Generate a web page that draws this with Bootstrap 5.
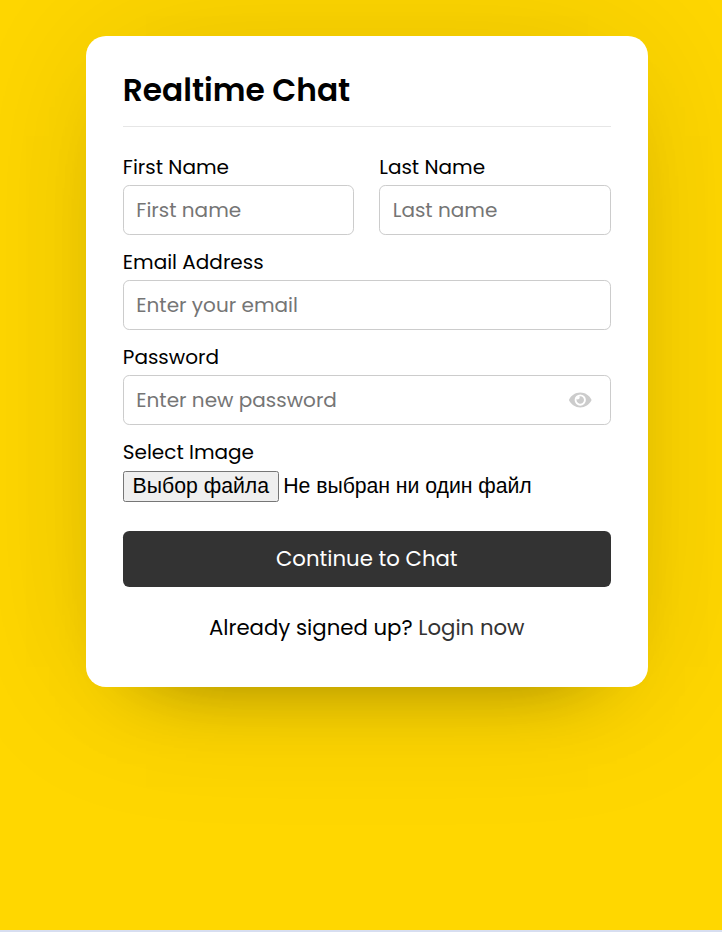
<!DOCTYPE html>
<html lang="en">
<head>
<meta charset="utf-8">
<meta name="viewport" content="width=device-width, initial-scale=1">
<title>Realtime Chat</title>
<link href="https://cdn.jsdelivr.net/npm/bootstrap@5.3.0/dist/css/bootstrap.min.css" rel="stylesheet">
<style>
body { background: gold; color: #000; font-family: Poppins, Inter, sans-serif; height: 932px; overflow: hidden; border-bottom: 2px solid #d7def0; }
.chat-panel { width: 562.5px; height: 651px; margin: 36px 0 0 85.5px; padding: 33px 37.3px 0; border-radius: 20px; background: #fff; box-shadow: 0 0 160px 0 rgba(0,0,0,.1), 0 40px 80px -60px rgba(0,0,0,.5); }
.chat-title { font-size: 31.25px; font-weight: 600; line-height: 43px; height: 58px; margin: 0; border-bottom: 1px solid #e6e6e6; }
.fields { padding-top: 25px; }
.field-label { font-size: 20px; line-height: 31px; height: 33px; margin: 0; display: block; }
.form-control.entry { height: 50px; padding: 0 12.5px; border: 1px solid #ccc; border-radius: 6.25px; font-size: 20px; color: #000; }
.entry::placeholder { color: #757575; opacity: 1; }
.name-gap { gap: 25px; }
.field-block { margin-bottom: 12px; }
.eye { right: 19px; top: 14.5px; width: 22.5px; height: 20px; color: #ccc; }
.picker { font-family: Arial, "Liberation Sans", sans-serif; font-size: 21.25px; line-height: 31px; letter-spacing: -.05px; margin-top: 1px; height: 31px; gap: 4.5px; }
.picker button { font: inherit; line-height: 27px; width: 156px; height: 31px; padding: 0 0 1px; background: #efefef; color: #000; border: 1px solid #767676; border-radius: 2.5px; }
.submit-btn { height: 56px; margin-top: 29px; padding: 0; background: #333; color: #fff; font-size: 21.25px; border: 0; border-radius: 6.25px; }
.signup { font-size: 21.25px; line-height: 32px; margin: 25px 0 0; }
.signup a { color: #333; }
</style>
<script src="https://cdn.jsdelivr.net/npm/bootstrap@5.3.0/dist/js/bootstrap.bundle.min.js"></script>
</head>
<body>
<main class="chat-panel">
  <h1 class="chat-title">Realtime Chat</h1>
  <form class="fields">
    <div class="d-flex name-gap field-block">
      <div class="flex-fill w-50"><label class="field-label" for="fname">First Name</label><input id="fname" class="form-control entry" placeholder="First name"></div>
      <div class="flex-fill w-50"><label class="field-label" for="lname">Last Name</label><input id="lname" class="form-control entry" placeholder="Last name"></div>
    </div>
    <div class="field-block"><label class="field-label" for="email">Email Address</label><input id="email" class="form-control entry" placeholder="Enter your email"></div>
    <div class="field-block">
      <label class="field-label" for="pass">Password</label>
      <div class="position-relative">
        <input id="pass" type="password" class="form-control entry" placeholder="Enter new password">
        <svg class="eye position-absolute" viewBox="0 0 576 512" fill="currentColor" aria-hidden="true"><path d="M572.52 241.4C518.29 135.59 410.93 64 288 64S57.68 135.64 3.48 241.41a32.35 32.35 0 0 0 0 29.19C57.71 376.41 165.07 448 288 448s230.32-71.64 284.52-177.41a32.35 32.35 0 0 0 0-29.19zM288 400a144 144 0 1 1 144-144 143.93 143.93 0 0 1-144 144zm0-240a95.31 95.31 0 0 0-25.31 3.79 47.85 47.85 0 0 1-66.9 66.9A95.78 95.78 0 1 0 288 160z"/></svg>
      </div>
    </div>
    <span class="field-label">Select Image</span>
    <div class="picker d-flex align-items-start"><button type="button">Выбор файла</button><span>Не выбран ни один файл</span></div>
    <button type="button" class="btn submit-btn w-100">Continue to Chat</button>
  </form>
  <p class="signup text-center">Already signed up? <a class="text-decoration-none" href="#">Login now</a></p>
</main>
</body>
</html>
